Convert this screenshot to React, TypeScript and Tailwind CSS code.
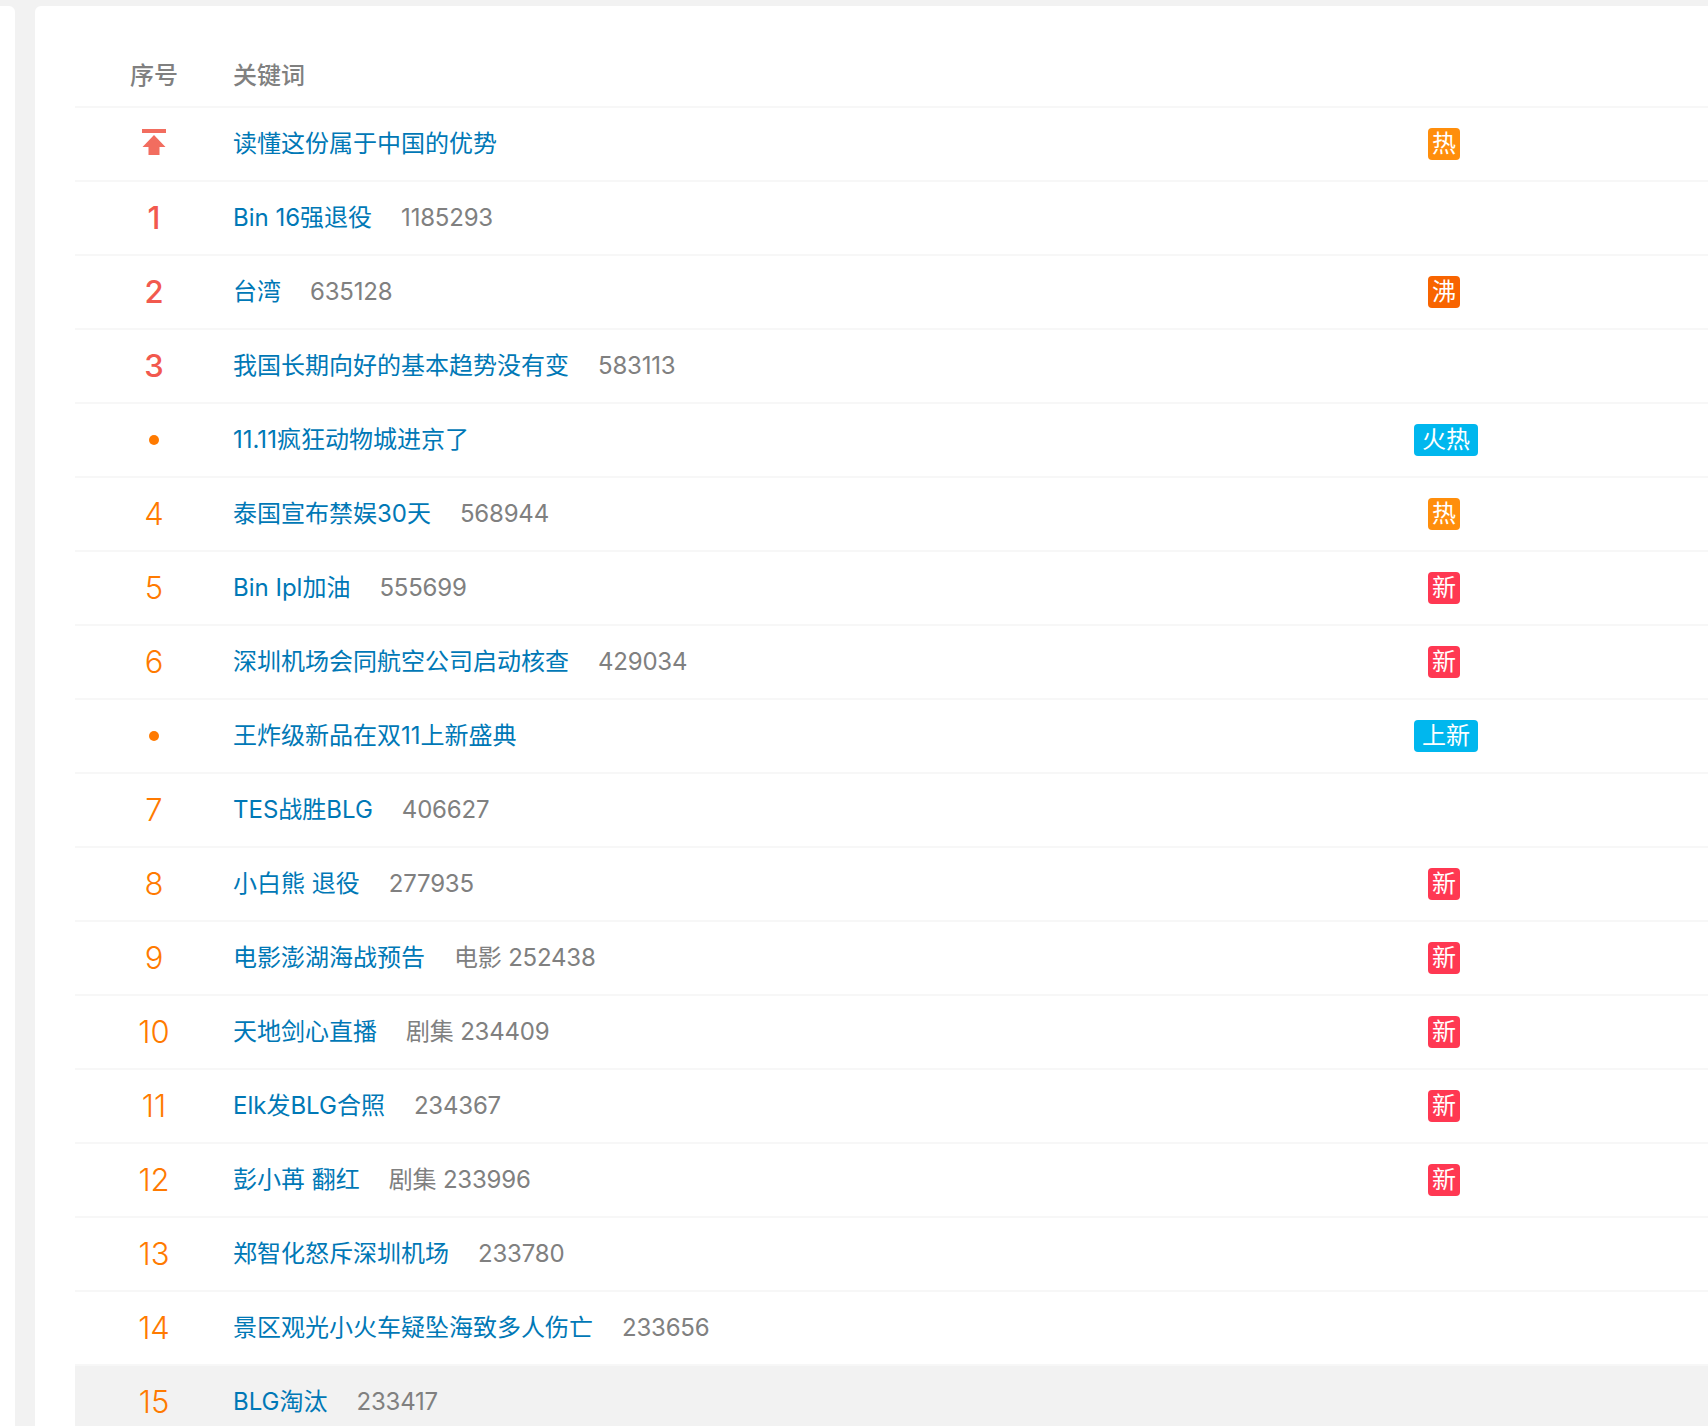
const FONT = "font-['Inter','Noto_Sans_CJK_SC',sans-serif]";

type Row = {
  rank: number | "top" | "dot";
  word: string;
  count?: string;
  mark?: keyof typeof marks;
};

const marks = {
  热: "bg-[#ff8e0c]",
  沸: "bg-[#f86400]",
  新: "bg-[#ff3852]",
  火热: "bg-[#00b7ee]",
  上新: "bg-[#00b7ee]",
};

const rows: Row[] = [
  { rank: "top", word: "读懂这份属于中国的优势", mark: "热" },
  { rank: 1, word: "Bin 16强退役", count: "1185293" },
  { rank: 2, word: "台湾", count: "635128", mark: "沸" },
  { rank: 3, word: "我国长期向好的基本趋势没有变", count: "583113" },
  { rank: "dot", word: "11.11疯狂动物城进京了", mark: "火热" },
  { rank: 4, word: "泰国宣布禁娱30天", count: "568944", mark: "热" },
  { rank: 5, word: "Bin Ipl加油", count: "555699", mark: "新" },
  { rank: 6, word: "深圳机场会同航空公司启动核查", count: "429034", mark: "新" },
  { rank: "dot", word: "王炸级新品在双11上新盛典", mark: "上新" },
  { rank: 7, word: "TES战胜BLG", count: "406627" },
  { rank: 8, word: "小白熊 退役", count: "277935", mark: "新" },
  { rank: 9, word: "电影澎湖海战预告", count: "电影 252438", mark: "新" },
  { rank: 10, word: "天地剑心直播", count: "剧集 234409", mark: "新" },
  { rank: 11, word: "Elk发BLG合照", count: "234367", mark: "新" },
  { rank: 12, word: "彭小苒 翻红", count: "剧集 233996", mark: "新" },
  { rank: 13, word: "郑智化怒斥深圳机场", count: "233780" },
  { rank: 14, word: "景区观光小火车疑坠海致多人伤亡", count: "233656" },
  { rank: 15, word: "BLG淘汰", count: "233417" },
];

function RankCell({ rank }: { rank: Row["rank"] }) {
  if (rank === "top") {
    return (
      <svg width="24" height="26" viewBox="0 0 24 26" className="-mt-[4px]" fill="#f26d5f">
        <rect x="0" y="0" width="24" height="4" />
        <path d="M12 6 L23.5 18 H17.5 V26 H6.5 V18 H0.5 Z" />
      </svg>
    );
  }
  if (rank === "dot") {
    return <span className="block h-[10px] w-[10px] rounded-full bg-[#ff7a00]" />;
  }
  return (
    <span className={rank <= 3 ? "text-[31px] font-medium text-[#f2594e]" : "text-[31px] font-light text-[#ff7a00]"}>
      {rank}
    </span>
  );
}

export default function App() {
  return (
    <div className={`flex h-[1426px] gap-[20px] overflow-hidden bg-[#f2f2f2] pt-[6px] ${FONT}`}>
      <div className="w-[15px] shrink-0 rounded-tr-[6px] bg-white" />
      <main className="min-w-0 flex-1 rounded-tl-[6px] bg-white pl-[40px]">
        {/* Header */}
        <div className="flex h-[102px] items-end border-b-2 border-[#f7f7f7] pb-[14px] text-[24px] font-medium leading-[32px] text-[#808080]">
          <div className="w-[158px] text-center">序号</div>
          <div>关键词</div>
        </div>

        {/* Rows */}
        {rows.map((row) => (
          <div
            key={row.word}
            className={`flex h-[74px] items-center border-b-2 border-[#f7f7f7] ${row.rank === 15 ? "bg-[#f2f2f2]" : ""}`}
          >
            <div className="flex w-[158px] shrink-0 items-center justify-center leading-[40px]">
              <RankCell rank={row.rank} />
            </div>
            <div className="flex min-w-0 flex-1 items-center gap-[29px] text-[24px] leading-[32px]">
              <span className="text-[#0078b6]">{row.word}</span>
              {row.count && <span className="tracking-[-0.2px] text-[#808080]">{row.count}</span>}
            </div>
            <div className="w-[294px] shrink-0">
              {row.mark && (
                <span
                  className={`block h-[32px] rounded-[4px] text-center text-[24px] leading-[32px] text-white ${marks[row.mark]} ${
                    row.mark.length > 1 ? "w-[64px]" : "ml-[14px] w-[32px]"
                  }`}
                >
                  {row.mark}
                </span>
              )}
            </div>
          </div>
        ))}
      </main>
    </div>
  );
}
